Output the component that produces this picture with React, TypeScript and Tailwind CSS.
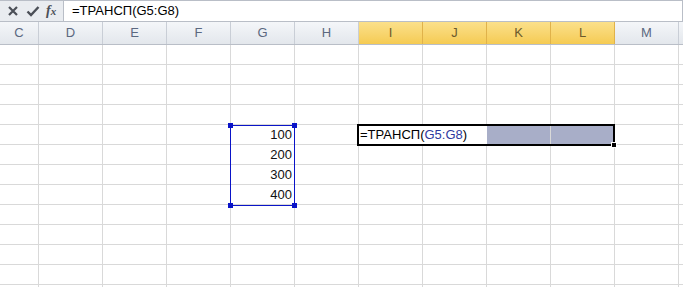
import React from "react";

const cols = ["C", "D", "E", "F", "G", "H", "I", "J", "K", "L", "M", ""];
const widths = [39, 64, 64, 64, 64, 64, 64, 64, 64, 64, 64, 10];
const selected = ["I", "J", "K", "L"];
const values: Record<number, string> = { 5: "100", 6: "200", 7: "300", 8: "400" };

function Handle({ className }: { className: string }) {
  return <div className={`absolute w-[5px] h-[5px] bg-[#0a14c8] ${className}`} />;
}

export default function App() {
  const rows = Array.from({ length: 13 }, (_, i) => i + 1);
  return (
    <div className="w-[683px] h-[287px] overflow-hidden bg-white font-['Liberation_Sans',Arial,sans-serif] text-[13px]">
      {/* formula bar */}
      <div className="flex h-[22px] border-t border-b border-[#b9bec7]">
        <div className="flex w-[63px] items-center bg-[#e9ecf0] pl-[6px] text-[#4b4f57]">
          <svg width="12" height="12" viewBox="0 0 12 12" className="ml-[1px]">
            <path d="M2 2 L10 10 M10 2 L2 10" stroke="#4b4f57" strokeWidth="2.2" />
          </svg>
          <svg width="14" height="12" viewBox="0 0 14 12" className="ml-[7px]">
            <path d="M1.5 6.5 L5 10 L12.5 2" stroke="#4b4f57" strokeWidth="2.4" fill="none" />
          </svg>
          <span className="ml-[6px] font-['Liberation_Serif',serif] italic text-[14px] font-bold leading-none">
            f<span className="text-[11px]">x</span>
          </span>
        </div>
        <div className="flex flex-1 items-center border-l border-r border-[#b9bec7] pl-[8px] text-[13px] text-black">
          =ТРАНСП(G5:G8)
        </div>
      </div>

      {/* sheet */}
      <div className="relative">
        <div className="flex h-[23px] border-b border-[#b9bec7]">
          {cols.map((c, i) => {
            const sel = selected.includes(c);
            return (
              <div
                key={i}
                style={{ width: widths[i] }}
                className={`flex shrink-0 items-center justify-center border-r text-[13px] ${
                  sel
                    ? "bg-gradient-to-b from-[#fbe08a] to-[#f5cb52] border-[#e0b24a] text-[#6b5a2c]"
                    : "bg-gradient-to-b from-[#f4f6f9] to-[#e3e7ec] border-[#c9ced6] text-[#5b6880]"
                }`}
              >
                {c}
              </div>
            );
          })}
        </div>
        {rows.map((r) => (
          <div key={r} className="flex h-[20px]">
            {cols.map((c, i) => (
              <div
                key={i}
                style={{ width: widths[i] }}
                className={`flex shrink-0 items-center justify-end border-r border-b border-[#d9d9d9] pr-[2px] text-[#111] ${
                  r === 5 && (c === "J" || c === "K" || c === "L") ? "bg-[#a8aec8]" : ""
                }`}
              >
                {c === "G" && values[r]}
              </div>
            ))}
          </div>
        ))}

        {/* reference range G5:G8 */}
        <div className="absolute left-[230px] top-[103px] w-[65px] h-[81px] border border-[#0a14c8]">
          <Handle className="-left-[3px] -top-[3px]" />
          <Handle className="-right-[3px] -top-[3px]" />
          <Handle className="-left-[3px] -bottom-[3px]" />
          <Handle className="-right-[3px] -bottom-[3px]" />
        </div>

        {/* active range I5:L5 */}
        <div className="absolute left-[357px] top-[102px] w-[258px] h-[22px] border-2 border-black">
          <div className="flex h-full w-[128px] items-center bg-white pl-[1px] text-black">
            =ТРАНСП(<span className="text-[#2e3a9e]">G5:G8</span>)
          </div>
          <div className="absolute -right-[4px] -bottom-[4px] w-[6px] h-[6px] bg-black border border-white" />
        </div>
      </div>
    </div>
  );
}
